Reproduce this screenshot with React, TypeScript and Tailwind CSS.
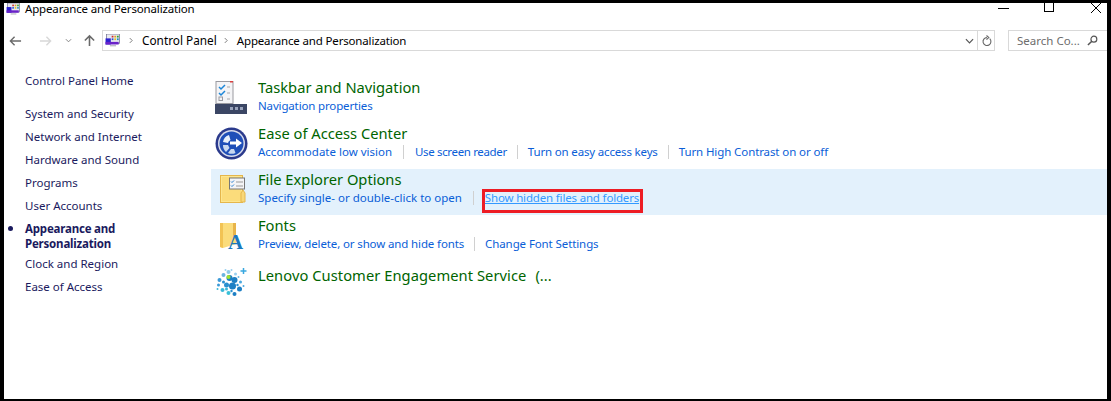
import React from 'react';

const uiFont = "font-['Noto_Sans','Open_Sans',sans-serif]";

const navItems = [
  'System and Security',
  'Network and Internet',
  'Hardware and Sound',
  'Programs',
  'User Accounts',
];

const PanelIcon = ({ className }: { className?: string }) => (
  <svg viewBox="0 0 17 16" className={className}>
    <rect x="1" y="0" width="15" height="11" fill="#e8e8f0" stroke="#6a6a8a" strokeWidth="0.8" />
    <rect x="0" y="5" width="6" height="7" fill="#2a1fd0" />
    <rect x="0" y="9" width="15" height="3" fill="#6a22c8" />
    <rect x="7" y="2" width="2" height="2" fill="#d02a2a" />
    <rect x="10" y="2" width="2" height="2" fill="#e0a020" />
    <rect x="13" y="2" width="2" height="2" fill="#30a030" />
    <rect x="7" y="5" width="2" height="2" fill="#2a50d0" />
    <rect x="10" y="5" width="2" height="2" fill="#e0c020" />
    <rect x="13" y="5" width="2" height="2" fill="#2090c0" />
    <rect x="5" y="13" width="7" height="1" fill="#9a9aa8" />
  </svg>
);

const TaskbarIcon = () => (
  <svg viewBox="0 0 33 35" className="w-[33px] h-[35px] ml-[4px] mt-[4px]">
    <rect x="1" y="0.5" width="17" height="22" fill="#f4f4f6" stroke="#9a9aa0" />
    <path d="M1 25h17v-2H1z" fill="#f4f4f6" />
    <path d="M4 6l2 2 4-4M4 12l2 2 4-4" fill="none" stroke="#1c86d8" strokeWidth="1.5" />
    <rect x="4" y="16" width="3.5" height="3.5" fill="none" stroke="#9a9aa0" />
    <path d="M12 6h3M12 12h3M12 18h3" stroke="#a8a8a8" />
    <rect x="15" y="0" width="3" height="1.5" fill="#d84040" />
    <rect x="0" y="23" width="32" height="10" fill="#3b4664" />
    <rect x="15" y="26" width="3" height="3" fill="#9aa4bc" />
    <rect x="20" y="26" width="3" height="3" fill="#9aa4bc" />
    <rect x="25" y="26" width="3" height="3" fill="#9aa4bc" />
  </svg>
);

const EaseIcon = () => (
  <svg viewBox="0 0 33 33" className="w-[33px] h-[33px] ml-[4px] mt-[4px]">
    <circle cx="16.5" cy="16.5" r="16" fill="#2b3a8c" />
    <circle cx="16.5" cy="16.5" r="13.5" fill="#d8dcec" />
    <circle cx="16.5" cy="16.5" r="12" fill="#1f4fb8" />
    <path d="M8 15a9 9 0 0 1 6-7l1.5 5a4 4 0 0 0-2.5 3z" fill="#e8f0fa" />
    <path d="M8 18h5l1.500 3-3.500 4a9 9 0 0 1-3-7z" fill="#c8d8f0" />
    <path d="M13 26l3-4h3l1.500 4a9 9 0 0 1-7.500 0z" fill="#c8d8f0" />
    <path d="M15 14.500h6v-3l6 4.500-6 4.500v-3h-6z" fill="#fff" />
  </svg>
);

const OptionsIcon = () => (
  <svg viewBox="0 0 26 29" className="w-[26px] h-[29px] ml-[9px] mt-[6px]">
    <rect x="0.5" y="0.5" width="22" height="27" fill="#fde68f" stroke="#e5b64c" />
    <rect x="2" y="2" width="19" height="24" fill="#fbdc7b" />
    <path d="M21 27v-9l2-3 2 3v9z" fill="#f8d778" stroke="#e5b64c" />
    <rect x="9.500" y="3" width="15" height="11" fill="#f4f4f6" stroke="#777" />
    <path d="M11 6.500l1 1 2-2M11 10.500l1 1 2-2" fill="none" stroke="#2a80d0" />
    <path d="M16 7h7M16 11h7" stroke="#999" />
  </svg>
);

const FontsIcon = () => (
  <svg viewBox="0 0 26 28" className="w-[26px] h-[28px] ml-[9px] mt-[7px] overflow-visible">
    <path d="M0 1h16v21l-13 4-3-1z" fill="#fbdc7b" />
    <path d="M0 1h3v25l-3-1z" fill="#f2c354" />
    <path d="M16 1v15l-3 2V1z" fill="#e8b44a" />
    <text x="8" y="27" fontFamily="Liberation Serif, serif" fontWeight="700" fontSize="21" fill="#1b79bd">
      A
    </text>
  </svg>
);

const LenovoIcon = () => (
  <svg viewBox="1 0 32 31" className="w-[33px] h-[31px] ml-[4px] mt-[6px]">
    {[
      [15, 11, 3, '#1d7fc4'], [20, 13, 3, '#1d7fc4'], [18, 19, 3.500, '#1d7fc4'], [12, 18, 2.500, '#2a90d0'],
      [14, 5, 2, '#8cc8e8'], [9, 8, 2, '#6ab4e0'], [5, 13, 2, '#3a9ad8'], [4, 18, 1.500, '#3a9ad8'],
      [8, 23, 2, '#39b8d8'], [14, 26, 2, '#39c0d8'], [20, 27, 2, '#1d7fc4'], [25, 22, 2.500, '#1d7fc4'],
      [26, 15, 1.500, '#4aa8e0'], [21, 7, 1.500, '#9ad0f0'], [24, 10, 1, '#6ab4e0'], [9, 15, 1.500, '#2a90d0'],
      [12, 22, 1.500, '#39b8d8'], [17, 3, 1, '#9ad0f0'], [11, 3, 1, '#9ad0f0'], [3, 22, 1, '#39b8d8'],
      [29, 19, 1, '#4aa8e0'], [23, 18, 1.200, '#2a90d0'], [17, 24, 1.200, '#2a90d0'],
    ].map(([cx, cy, r, fill], i) => (
      <circle key={i} cx={cx} cy={cy} r={r} fill={fill as string} />
    ))}
    <circle cx="14" cy="10" r="2" fill="#9be22d" />
    <path d="M29 1v6M26 4h6" stroke="#39a8e0" strokeWidth="1.500" />
  </svg>
);

const Sep = ({ narrow }: { narrow?: boolean }) => (
  <span className={`w-px h-[14px] bg-[#d0d0d0] shrink-0 ${narrow ? 'mx-[10px]' : 'mx-[11px]'}`} />
);

const A = ({ children, className }: { children: React.ReactNode; className?: string }) => (
  <span className={`text-[#0a5ed7] whitespace-nowrap ${className ?? 'tracking-[-0.15px]'}`}>{children}</span>
);

const Row = ({
  icon,
  title,
  active,
  children,
}: {
  icon: React.ReactNode;
  title: React.ReactNode;
  active?: boolean;
  children?: React.ReactNode;
}) => (
  <div className={`flex h-[46px] ${active ? 'bg-[#e3f1fc]' : ''}`}>
    <div className="w-[47px] shrink-0">{icon}</div>
    <div>
      <div className="text-[14.7px] leading-[20px] text-[#006400] whitespace-nowrap">{title}</div>
      <div className="flex items-center h-[15px] mt-[1px] text-[11.5px] leading-[15px]">{children}</div>
    </div>
  </div>
);

function Chevron({ className }: { className?: string }) {
  return (
    <svg viewBox="0 0 5 8" className={`w-[4px] h-[7px] ${className}`}>
      <path d="M1 1l3 3-3 3" fill="none" stroke="#777" strokeWidth="1.200" />
    </svg>
  );
}

export default function App() {
  return (
    <div className={`${uiFont} w-[1111px] h-[401px] bg-black pl-[4px] pr-[4px] pt-[3px] pb-[2px] overflow-hidden`}>
      <div className="w-full h-full bg-white flex flex-col">
        <div className="h-[18px] flex items-start">
          <PanelIcon className="w-[17px] h-[13px] ml-[1px]" />
          <span className="ml-[3px] -mt-[2px] text-[11.5px] leading-[16px] text-black tracking-[-0.16px]">
            Appearance and Personalization
          </span>
          <div className="ml-auto flex items-start text-black mr-[6px]">
            <span className="w-[11px] h-px bg-black mt-[5px] mr-[35px]" />
            <span className="w-[10px] h-[9px] border border-black border-t-0 mr-[37px]" />
            <svg viewBox="0 0 10 10" className="w-[10px] h-[10px]">
              <path d="M0 0l10 10M10 0L0 10" stroke="#000" />
            </svg>
          </div>
        </div>

        <div className="h-[21px] mt-[9px] flex items-center">
          <svg viewBox="0 0 14 12" className="w-[13px] h-[12px] ml-[5px]">
            <path d="M13 6H2M6 1.500L1.500 6 6 10.500" fill="none" stroke="#6a6a6a" strokeWidth="1.500" />
          </svg>
          <svg viewBox="0 0 14 12" className="w-[13px] h-[12px] ml-[17px]">
            <path d="M1 6h11M8 1.500L12.500 6 8 10.500" fill="none" stroke="#d8d8d8" strokeWidth="1.500" />
          </svg>
          <svg viewBox="0 0 8 5" className="w-[7px] h-[5px] ml-[13px]">
            <path d="M1 1l3 3 3-3" fill="none" stroke="#777" />
          </svg>
          <svg viewBox="0 0 14 14" className="w-[13px] h-[13px] ml-[11px]">
            <path d="M7 13V2M2 7l5-5 5 5" fill="none" stroke="#6a6a6a" strokeWidth="1.700" />
          </svg>
          <div className="ml-[6px] w-[893px] h-[21px] border border-[#d9d9d9] flex items-center text-[11.5px] text-black">
            <PanelIcon className="w-[16px] h-[14px] ml-[2px]" />
            <Chevron className="ml-[8px]" />
            <span className="ml-[9px] text-[11.8px]">Control Panel</span>
            <Chevron className="ml-[7px]" />
            <span className="ml-[9px] tracking-[-0.16px]">Appearance and Personalization</span>
            <svg viewBox="0 0 10 6" className="w-[9px] h-[6px] ml-auto mr-[3px]">
              <path d="M1 1l4 4 4-4" fill="none" stroke="#555" strokeWidth="1.300" />
            </svg>
            <div className="w-[17px] h-full border-l border-[#d9d9d9] flex items-center justify-center">
              <svg viewBox="0 0 12 12" className="w-[11px] h-[12px]">
                <path d="M9.500 3.500a4.300 4.300 0 1 1-3-1.200M6 0l2.500 2.300L6 4.500" fill="none" stroke="#666" strokeWidth="1.200" />
              </svg>
            </div>
          </div>
          <div className="ml-[13px] flex-1 h-[21px] border border-[#d9d9d9] border-r-0 flex items-center pl-[8px] text-[11.5px] text-[#6d6d6d] whitespace-nowrap">
            Search Co...
            <svg viewBox="0 0 12 12" className="w-[11px] h-[11px] ml-[7px] shrink-0">
              <circle cx="7.500" cy="4.500" r="3.200" fill="none" stroke="#555" strokeWidth="1.300" />
              <path d="M5 7l-4 4" stroke="#555" strokeWidth="1.600" />
            </svg>
          </div>
        </div>

        <div className="flex flex-1 min-h-0">
          <nav className="w-[207px] shrink-0 pl-[21px] pt-[22px] text-[11.5px] leading-[15px] text-[#1a1a5e]">
            <div>Control Panel Home</div>
            <div className="mt-[18px] flex flex-col gap-[8px]">
              {navItems.map((n) => (
                <div key={n}>{n}</div>
              ))}
            </div>
            <div className="relative mt-[8px] font-bold tracking-[-0.2px]">
              <span className="absolute -left-[17px] top-[5px] w-[5px] h-[5px] rounded-full bg-[#1a1a5e]" />
              Appearance and
              <br />
              Personalization
            </div>
            <div className="mt-[5px]">Clock and Region</div>
            <div className="mt-[8px]">Ease of Access</div>
          </nav>

          <main className="flex-1 pt-[26px]">
            <Row icon={<TaskbarIcon />} title="Taskbar and Navigation">
              <A>Navigation properties</A>
            </Row>
            <Row icon={<EaseIcon />} title="Ease of Access Center">
              <A className="tracking-normal">Accommodate low vision</A>
              <Sep />
              <A className="tracking-[-0.35px]">Use screen reader</A>
              <Sep narrow />
              <A className="tracking-[-0.17px]">Turn on easy access keys</A>
              <Sep narrow />
              <A className="tracking-[-0.1px]">Turn High Contrast on or off</A>
            </Row>
            <Row icon={<OptionsIcon />} title="File Explorer Options" active>
              <A className="tracking-normal">Specify single- or double-click to open</A>
              <Sep />
              <span className="self-start -mt-[1px] -ml-[3px] h-[24px] border-[3px] border-[#ed1c24] pr-[1px] leading-[12px] tracking-[-0.17px] text-[#3399ff] underline whitespace-nowrap">
                Show hidden files and folders
              </span>
            </Row>
            <Row icon={<FontsIcon />} title="Fonts">
              <A className="tracking-[-0.13px]">Preview, delete, or show and hide fonts</A>
              <Sep narrow />
              <A className="tracking-[-0.1px]">Change Font Settings</A>
            </Row>
            <Row
              icon={<LenovoIcon />}
              title={
                <span className="block mt-[4px]">
                  <span className="tracking-[0.06px]">Lenovo Customer Engagement Service</span>
                  <span className="ml-[9px]">(...</span>
                </span>
              }
            />
          </main>
        </div>
      </div>
    </div>
  );
}
